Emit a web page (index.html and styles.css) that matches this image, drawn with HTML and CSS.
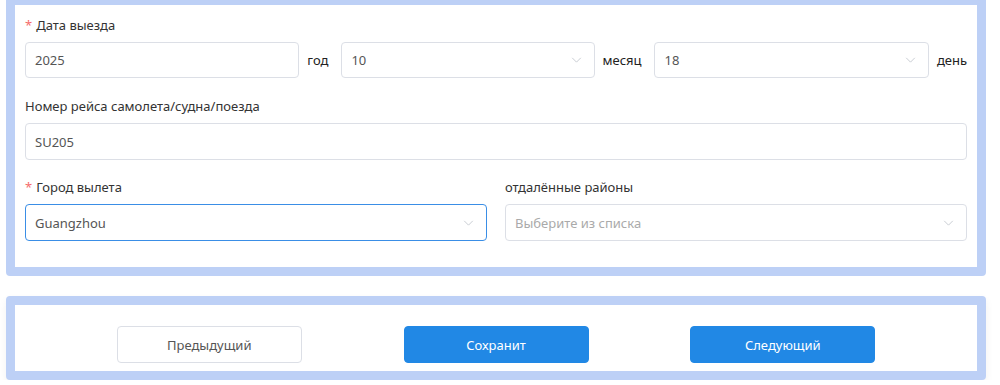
FILE: index.html
```html
<!DOCTYPE html>
<html lang="ru">
<head>
    <meta charset="UTF-8">
    <meta name="viewport" content="width=device-width, initial-scale=1.0">
    <title>Данные поездки</title>
    <link rel="stylesheet" href="styles.css">
</head>
<body>
  <div class="page">
    <div class="panel panel-form">
        <div class="form-item">
            <label class="form-label"><span class="req">*</span>Дата выезда</label>
            <div class="date-row">
                <div class="field">2025</div>
                <span class="unit">год</span>
                <div class="field select">
                    <span>10</span>
                    <svg class="arrow" viewBox="0 0 12 7"><path d="M1 1l5 5 5-5"/></svg>
                </div>
                <span class="unit">месяц</span>
                <div class="field select">
                    <span>18</span>
                    <svg class="arrow" viewBox="0 0 12 7"><path d="M1 1l5 5 5-5"/></svg>
                </div>
                <span class="unit">день</span>
            </div>
        </div>

        <div class="form-item">
            <label class="form-label">Номер рейса самолета/судна/поезда</label>
            <div class="field">SU205</div>
        </div>

        <div class="form-item two-cols">
            <div>
                <label class="form-label"><span class="req">*</span>Город вылета</label>
                <div class="field select focused">
                    <span>Guangzhou</span>
                    <svg class="arrow" viewBox="0 0 12 7"><path d="M1 1l5 5 5-5"/></svg>
                </div>
            </div>
            <div>
                <label class="form-label">отдалённые районы</label>
                <div class="field select">
                    <span class="placeholder">Выберите из списка</span>
                    <svg class="arrow" viewBox="0 0 12 7"><path d="M1 1l5 5 5-5"/></svg>
                </div>
            </div>
        </div>
    </div>

    <div class="panel panel-actions">
        <button class="btn btn-default">Предыдущий</button>
        <button class="btn btn-primary">Сохранит</button>
        <button class="btn btn-primary">Следующий</button>
    </div>
  </div>
</body>
</html>
```

FILE: styles.css
```css
* {
    margin: 0;
    padding: 0;
    box-sizing: border-box;
}

body {
    font-family: "Noto Sans", Arial, sans-serif;
    font-size: 13px;
    color: #333;
    background: white;
    overflow: hidden;
}

.page {
    padding: 0 14px 0 6px;
    margin-top: -4px;
}

.panel {
    background: white;
    border: 9px solid #bdd0f6;
    border-radius: 4px;
}

.panel-form {
    padding: 12px 10px 26px;
}

.form-item {
    margin-bottom: 9px;
}

.form-label {
    display: block;
    line-height: 16px;
    margin-bottom: 9px;
    color: #333;
}

.req {
    color: #f56c6c;
    margin-right: 4px;
}

/* year / month / day fields are not equal widths in the original */
.date-row {
    display: grid;
    grid-template-columns: 271fr auto 255fr auto 276fr auto;
    align-items: center;
    column-gap: 8px;
    margin-bottom: 20px;
}

.date-row .select {
    margin-left: 5px;
}

.unit {
    color: #222;
    white-space: nowrap;
}

.field {
    height: 37px;
    border: 1px solid #dcdfe6;
    border-radius: 4px;
    padding: 0 9px;
    display: flex;
    align-items: center;
    color: #555;
    background: white;
}

.date-row .field {
    height: 36px;
}

.select {
    justify-content: space-between;
}

.focused {
    border-color: #3a8ee6;
}

.placeholder {
    color: #aaa;
}

.arrow {
    width: 11px;
    height: 6px;
    fill: none;
    stroke: #c0c4cc;
    stroke-width: 1;
    margin-right: 3px;
}

.two-cols {
    display: grid;
    grid-template-columns: 1fr 1fr;
    gap: 18px;
    margin-top: 19px;
    margin-bottom: 0;
}

.panel-actions {
    margin-top: 20px;
    padding: 21px 0 8px;
    display: flex;
    justify-content: space-evenly;
    box-shadow: 0 4px 8px rgba(0,0,0,0.06);
}

.btn {
    width: 185px;
    height: 37px;
    border-radius: 4px;
    font-family: inherit;
    font-size: 13px;
    cursor: pointer;
}

.btn-default {
    background: white;
    border: 1px solid #dcdfe6;
    color: #555;
}

.btn-primary {
    background: #2188e5;
    border: 1px solid #2188e5;
    color: white;
}

.btn:hover {
    opacity: 0.9;
}
```
